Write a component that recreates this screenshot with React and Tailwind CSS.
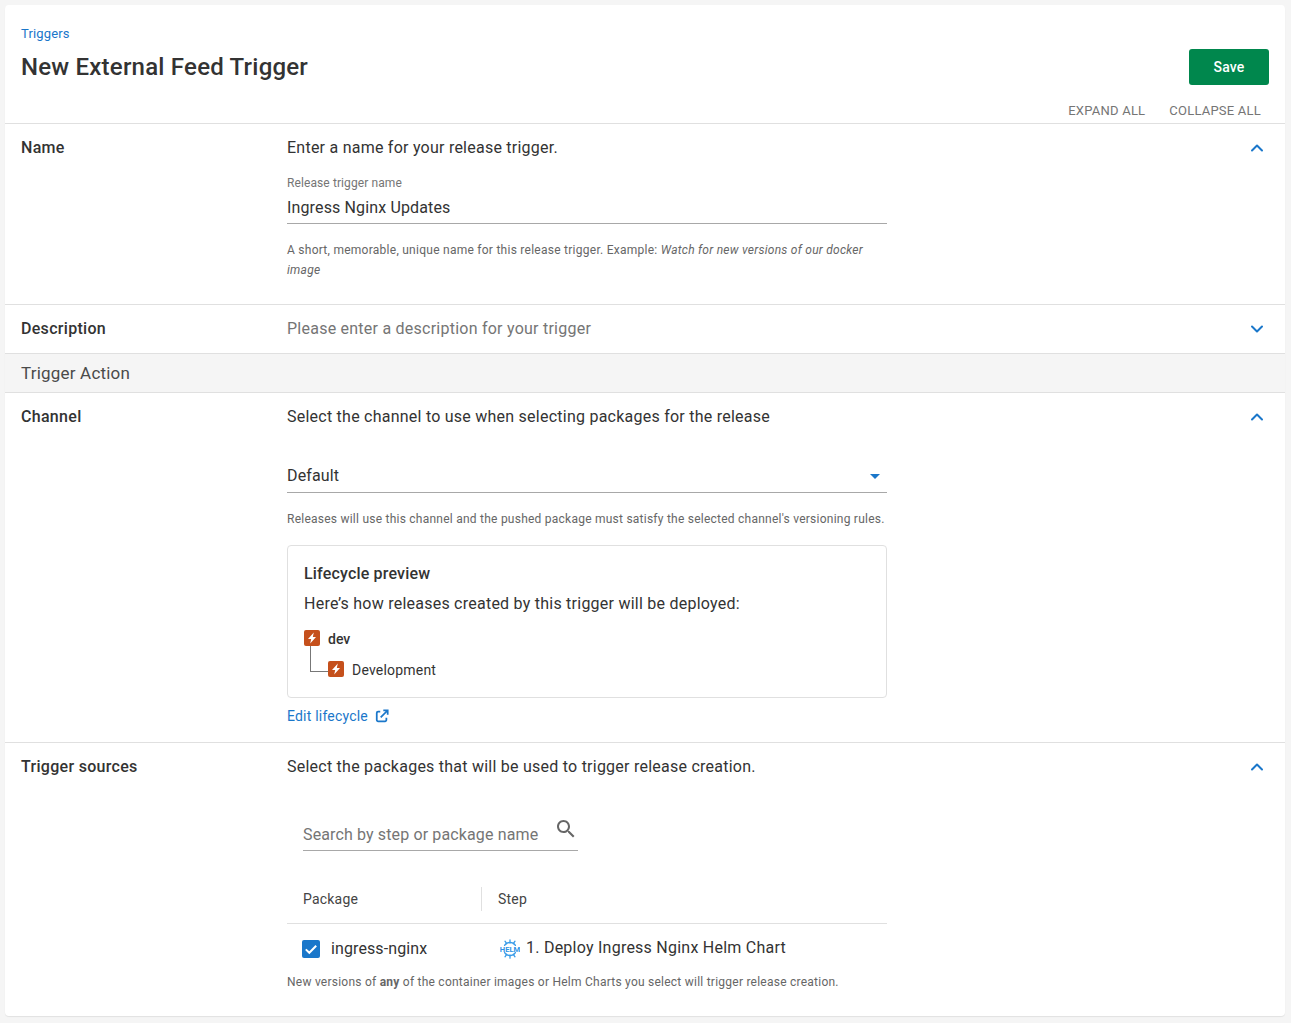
import React from "react";
import { ChevronUp, ChevronDown } from "lucide-react";

function Chevron({ up = true }) {
  const Icon = up ? ChevronUp : ChevronDown;
  return <Icon className="w-[20px] h-[20px] text-[#1a77ca] absolute right-[18px] top-[14px]" strokeWidth={2.4} />;
}

function Section({ label, up, className, children }) {
  return (
    <section className={`relative flex border-t border-[#e0e0e0] ${className}`}>
      <h3 className="w-[282px] pl-[16px] pt-[13px] text-[16px] leading-[22px] font-medium text-[#333333] tracking-[0.3px]">{label}</h3>
      <div className="w-[600px]">{children}</div>
      <Chevron up={up} />
    </section>
  );
}

function Summary({ children, muted }) {
  return <div className={`pt-[13px] text-[16px] leading-[22px] tracking-[0.24px] ${muted ? "text-[#757575]" : "text-[#333333]"}`}>{children}</div>;
}

function Bolt() {
  return (
    <div className="w-[16px] h-[16px] rounded-[2px] bg-[#c5501c] flex items-center justify-center">
      <svg viewBox="0 0 16 16" className="w-[16px] h-[16px]">
        <path d="M9.8 2.6 4 9h3.2L6.2 13.4 12 7H8.8z" fill="#ffffff" />
      </svg>
    </div>
  );
}

function HelmIcon() {
  return (
    <svg viewBox="0 0 20 20" className="w-[20px] h-[20px]">
      <g stroke="#3a9ce8" strokeWidth="1.3" fill="none" strokeLinecap="round">
        <path d="M4.6 6.4A6.4 6.4 0 0 1 15.4 6.4" />
        <path d="M4.6 13.6A6.4 6.4 0 0 0 15.4 13.6" />
        <path d="M10 .8v3.4M5 2.2l1.7 2.5M15 2.2l-1.7 2.5M10 19.2v-3.4M5 17.8l1.7-2.5M15 17.8l-1.7-2.5" />
      </g>
      <text x="10" y="12.7" textAnchor="middle" fontSize="7.6" fontWeight="700" fill="#2f93e4" fontFamily="Roboto, sans-serif">HELM</text>
    </svg>
  );
}

export default function App() {
  return (
    <div className="min-h-[1023px] bg-[#f5f5f5] pl-[5px] pr-[6px] py-[5px] font-['Roboto',sans-serif] text-[#333333]">
      <main className="h-[1011px] bg-white rounded-[4px] shadow-[0_1px_1px_rgba(0,0,0,0.08)] overflow-hidden">
        {/* Header */}
        <header className="relative h-[118px] px-[16px] pt-[21px]">
          <a className="block text-[13px] leading-[16px] text-[#1a77ca] tracking-[0.15px]">Triggers</a>
          <h1 className="mt-[9px] text-[24px] leading-[32px] font-medium text-[#333333] tracking-[0.22px]">New External Feed Trigger</h1>
          <button className="absolute right-[16px] top-[44px] w-[80px] h-[36px] rounded-[3px] bg-[#00874d] text-white text-[14px] font-medium tracking-[0.2px]">Save</button>
          <div className="absolute right-[24px] top-[98px] flex gap-[24px] text-[13px] leading-[16px] text-[#757575] tracking-[0.22px]">
            <span>EXPAND ALL</span>
            <span>COLLAPSE ALL</span>
          </div>
        </header>

        <Section label="Name" up className="h-[181px]">
          <Summary>Enter a name for your release trigger.</Summary>
          <div className="mt-[16px] text-[12px] leading-[16px] text-[#757575] tracking-[0.1px]">Release trigger name</div>
          <div className="mt-[5px] h-[28px] border-b border-[#a8a8a8] text-[16px] leading-[24px] tracking-[0.14px]">Ingress Nginx Updates</div>
          <p className="mt-[16px] text-[12px] leading-[20px] text-[#666666] tracking-[0.26px]">
            A short, memorable, unique name for this release trigger. Example: <em>Watch for new versions of our docker image</em>
          </p>
        </Section>

        <Section label="Description" up={false} className="h-[49px]">
          <Summary muted>Please enter a description for your trigger</Summary>
        </Section>

        <div className="h-[39px] border-t border-[#e0e0e0] bg-[#f5f5f5] pl-[16px] pt-[8px] text-[17px] leading-[22px] text-[#4a4a4a] tracking-[0.2px]">Trigger Action</div>

        <Section label="Channel" up className="h-[350px]">
          <Summary>Select the channel to use when selecting packages for the release</Summary>
          <div className="relative mt-[32px] h-[33px] border-b border-[#a8a8a8] text-[16px] leading-[32px] tracking-[0.14px]">
            Default
            <span className="absolute right-[7px] top-[14px] w-0 h-0 border-x-[5px] border-x-transparent border-t-[5px] border-t-[#1a77ca]" />
          </div>
          <p className="mt-[16px] text-[12px] leading-[20px] text-[#666666] tracking-[0.24px] whitespace-nowrap">Releases will use this channel and the pushed package must satisfy the selected channel's versioning rules.</p>
          <div className="mt-[16px] h-[153px] border border-[#e0e0e0] rounded-[4px] px-[16px] pt-[17px]">
            <h4 className="text-[16px] leading-[22px] font-medium tracking-[0.18px]">Lifecycle preview</h4>
            <p className="mt-[8px] text-[16px] leading-[22px] tracking-[0.24px]">Here’s how releases created by this trigger will be deployed:</p>
            <div className="relative mt-[15px]">
              <div className="flex items-center gap-[8px] h-[16px]">
                <Bolt />
                <span className="mt-[2px] text-[14px] font-medium">dev</span>
              </div>
              <div className="absolute left-[6px] top-[16px] w-[18px] h-[26px] border-l border-b border-[#777777]" />
              <div className="mt-[15px] ml-[24px] flex items-center gap-[8px] h-[16px]">
                <Bolt />
                <span className="mt-[2px] text-[14px] tracking-[0.2px]">Development</span>
              </div>
            </div>
          </div>
          <a className="mt-[8px] flex items-center gap-[7px] text-[14px] leading-[20px] text-[#1a77ca] tracking-[0.2px]">
            Edit lifecycle
            <svg viewBox="0 0 16 16" className="w-[14px] h-[14px]">
              <g fill="none" stroke="#1a77ca" strokeWidth="2">
                <path d="M6 3H3.5A1.5 1.5 0 0 0 2 4.5v8A1.5 1.5 0 0 0 3.5 14h8a1.5 1.5 0 0 0 1.5-1.5V10" />
                <path d="M6.5 9.5 14 2M9.5 1.5H14.5V6.5" />
              </g>
            </svg>
          </a>
        </Section>

        <Section label="Trigger sources" up className="h-[274px]">
          <Summary>Select the packages that will be used to trigger release creation.</Summary>
          <div className="relative ml-[16px] mt-[38px] w-[275px] h-[35px] border-b border-[#a8a8a8] text-[16px] leading-[24px] text-[#757575] pt-[7px] tracking-[0.13px]">
            Search by step or package name
            <svg viewBox="0 0 24 24" className="absolute right-0 top-[1px] w-[24px] h-[24px]">
              <path
                fill="#666666"
                d="M15.5 14h-.79l-.28-.27C15.41 12.59 16 11.11 16 9.5 16 5.91 13.09 3 9.5 3S3 5.91 3 9.5 5.91 16 9.5 16c1.61 0 3.09-.59 4.23-1.57l.27.28v.79l5 4.99L20.49 19l-4.99-5zm-6 0C7.01 14 5 11.99 5 9.5S7.01 5 9.5 5 14 7.01 14 9.5 11.99 14 9.5 14z"
              />
            </svg>
          </div>
          <div className="mt-[23px] h-[50px] flex items-center border-b border-[#e0e0e0] text-[14px] tracking-[0.2px] text-[#444444]">
            <div className="w-[195px] pl-[16px] h-[24px] leading-[24px] border-r border-[#e0e0e0]">Package</div>
            <div className="pl-[16px] leading-[24px]">Step</div>
          </div>
          <div className="flex items-center h-[49px]">
            <div className="w-[213px] pl-[15px] flex items-center gap-[11px]">
              <span className="w-[18px] h-[18px] rounded-[2px] bg-[#1a77ca] flex items-center justify-center">
                <svg viewBox="0 0 18 18" className="w-[18px] h-[18px]">
                  <path d="M3.8 9.4 7.3 12.8 14.2 5.8" fill="none" stroke="#ffffff" strokeWidth="2" />
                </svg>
              </span>
              <span className="text-[16px] tracking-[0.1px]">ingress-nginx</span>
            </div>
            <HelmIcon />
            <span className="ml-[6px] mt-[-1px] text-[16px] tracking-[0.24px]">1. Deploy Ingress Nginx Helm Chart</span>
          </div>
          <p className="text-[12px] leading-[20px] text-[#666666] tracking-[0.24px] mt-[-1px]">
            New versions of <strong className="font-bold">any</strong> of the container images or Helm Charts you select will trigger release creation.
          </p>
        </Section>
      </main>
    </div>
  );
}
